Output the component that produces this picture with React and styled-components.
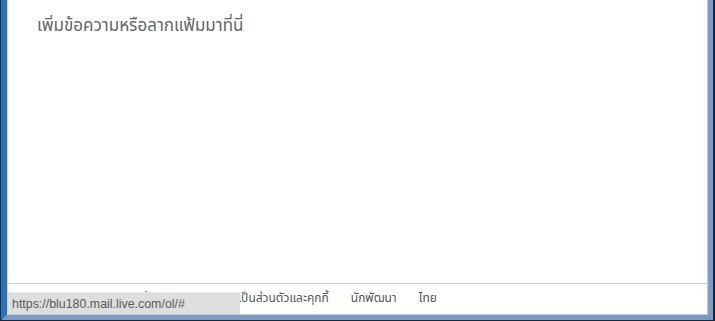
import React from 'react'
import styled, { createGlobalStyle } from 'styled-components'

const Global = createGlobalStyle`
  html, body {
    margin: 0;
    padding: 0;
    width: 715px;
    height: 321px;
    overflow: hidden;
    background: #1d2a3a;
  }
`

const Frame = styled.div`
  width: 715px;
  height: 321px;
  box-sizing: border-box;
  border-left: 1px solid #1c2f45;
  border-right: 2px solid #1c2736;
  border-bottom: 1px solid #1c2736;
  display: flex;
`

const Glass = styled.div`
  flex: 1;
  display: flex;
  box-sizing: border-box;
  border-left: 6px solid #2e72b6;
  border-right: 5px solid #7f9dc4;
  border-bottom: 5px solid #7c9bc2;
  border-bottom-left-radius: 2px;
`

const Client = styled.div`
  flex: 1;
  position: relative;
  display: flex;
  flex-direction: column;
  background: #fff;
  border-left: 1px solid #c9d3de;
  border-right: 1px solid #c4c9cf;
  border-bottom: 1px solid #c4c9cf;
  font-family: Tahoma, 'Noto Sans Thai', 'Noto Sans', 'DejaVu Sans', sans-serif;
`

const Compose = styled.div`
  flex: 1;
  padding: 13px 29px;
  font-size: 17px;
  color: #666;
`

const Footer = styled.div`
  height: 31px;
  box-sizing: border-box;
  padding: 0 0 3px 16px;
  border-top: 1px solid #cfcfcf;
  display: flex;
  align-items: center;
  gap: 22px;
  font-size: 12px;
  color: #555;
`

const Link = styled.span`
  white-space: nowrap;
`

const StatusBar = styled.div`
  position: absolute;
  left: 0;
  bottom: 0;
  width: 232px;
  height: 22px;
  box-sizing: border-box;
  padding-left: 4px;
  display: flex;
  align-items: center;
  background: #dedede;
  border-top: 1px solid #e8e8e8;
  color: #5a5a5a;
  font-family: 'Liberation Sans', Arial, sans-serif;
  font-size: 12.4px;
`

export default function App() {
  return (
    <>
      <Global />
      <Frame>
        <Glass>
          <Client>
            <Compose>เพิ่มข้อความหรือลากแฟ้มมาที่นี่</Compose>
            <Footer>
              <Link>© 2015 Microsoft</Link>
              <Link>ข้อกำหนด</Link>
              <Link>ความเป็นส่วนตัวและคุกกี้</Link>
              <Link>นักพัฒนา</Link>
              <Link>ไทย</Link>
            </Footer>
            <StatusBar>https://blu180.mail.live.com/ol/#</StatusBar>
          </Client>
        </Glass>
      </Frame>
    </>
  )
}
